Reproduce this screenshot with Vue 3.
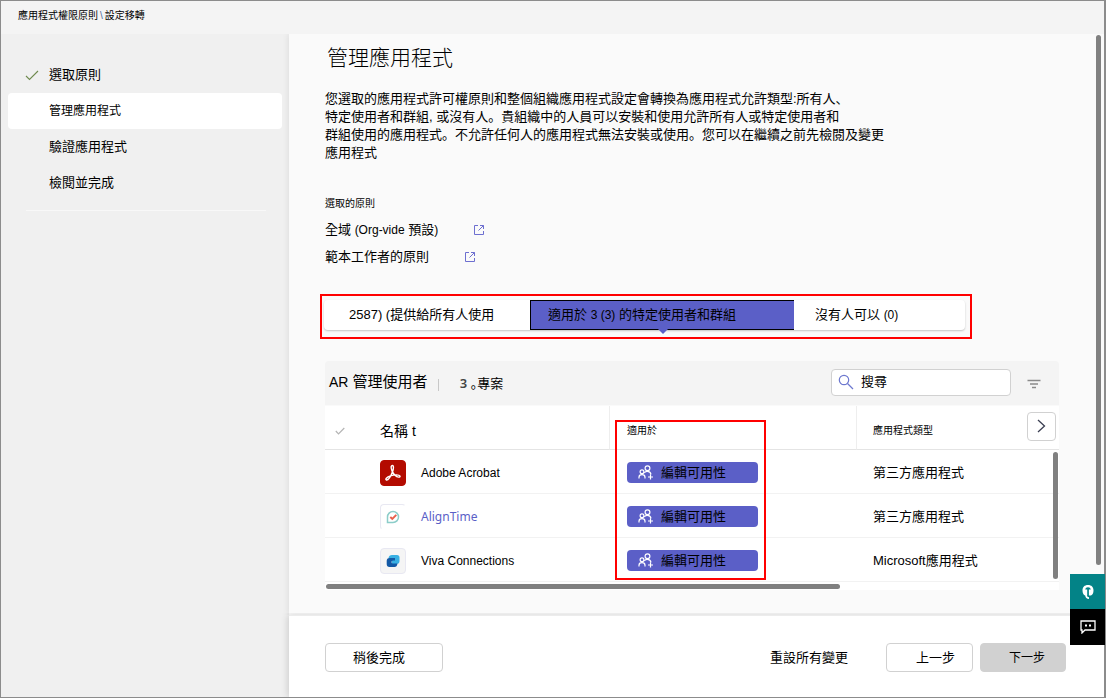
<script setup>
import { ref } from 'vue'

const steps = [
  { label: '選取原則', done: true },
  { label: '管理應用程式', active: true },
  { label: '驗證應用程式' },
  { label: '檢閱並完成' }
]
const apps = [
  { name: 'Adobe Acrobat', icon: 'acrobat', type: '第三方應用程式' },
  { name: 'AlignTime', icon: 'align', type: '第三方應用程式', link: true },
  { name: 'Viva Connections', icon: 'viva', type: 'Microsoft應用程式' }
]
const query = ref('')
</script>

<template>
  <div class="page">
    <header class="top">應用程式權限原則<span class="slash">\</span>設定移轉</header>
    <div class="body">
      <aside class="side">
        <nav>
          <a v-for="s in steps" :key="s.label" href="#" class="step" :class="{ active: s.active }">
            <span class="mark">
              <svg v-if="s.done" width="14" height="11" viewBox="0 0 14 11"><path d="M1 6l3.5 3.5L13 1" fill="none" stroke="#6f8a4e" stroke-width="1.1" /></svg>
            </span>
            {{ s.label }}
          </a>
        </nav>
        <hr />
      </aside>

      <main class="main">
        <div class="scroll">
          <div class="content">
            <h1>管理應用程式</h1>
            <p class="desc">
              您選取的應用程式許可權原則和整個組織應用程式設定會轉換為應用程式允許類型:所有人、<br />
              特定使用者和群組, 或沒有人。貴組織中的人員可以安裝和使用允許所有人或特定使用者和<br />
              群組使用的應用程式。不允許任何人的應用程式無法安裝或使用。您可以在繼續之前先檢閱及變更<br />
              應用程式
            </p>
            <h2>選取的原則</h2>
            <ul class="policies">
              <li>
                <span>全域 <span class="latin">(Org-vide</span> 預設<span class="latin">)</span></span>
                <a href="#" aria-label="全域">
                  <svg width="10" height="10" viewBox="0 0 10 10" fill="none" stroke="#6d6fd0"><path d="M4 .5H.5v9h9V6M6 .5h3.5V4M9.500 .5L4.500 5.500" /></svg>
                </a>
              </li>
              <li>
                <span>範本工作者的原則</span>
                <a href="#" aria-label="範本工作者的原則">
                  <svg width="10" height="10" viewBox="0 0 10 10" fill="none" stroke="#6d6fd0"><path d="M4 .5H.5v9h9V6M6 .5h3.5V4M9.500 .5L4.500 5.500" /></svg>
                </a>
              </li>
            </ul>

            <div class="frame">
              <div class="tabs" role="tablist">
                <button class="tab first" role="tab">2587) (提供給所有人使用</button>
                <button class="tab on" role="tab" aria-selected="true">適用於 <span class="latin">3 (3)</span> 的特定使用者和群組</button>
                <button class="tab last" role="tab">沒有人可以 <span class="latin">(0)</span></button>
              </div>
            </div>

            <section class="card">
              <div class="toolbar">
                <span class="title"><span class="ar">AR</span> 管理使用者</span>
                <span class="bar"></span>
                <span class="count"><b>3</b> <span class="jp">。</span>專案</span>
                <label class="search">
                  <svg width="16" height="16" viewBox="0 0 16 16" fill="none" stroke="#6d78cf" stroke-width="1.2"><circle cx="6" cy="6" r="4.700" /><path d="M9.500 9.500L15 15" /></svg>
                  <input v-model="query" type="text" placeholder="搜尋" aria-label="搜尋" />
                </label>
                <button class="filter" aria-label="filter">
                  <svg width="14" height="10" viewBox="0 0 14 10" fill="none" stroke="#8a8a8a"><path d="M.5 1.500h13M3 5h8M5 8.500h4" stroke-width="1.300" /></svg>
                </button>
              </div>
              <div class="grid">
                <table>
                  <colgroup><col class="c1" /><col class="c2" /><col class="c3" /><col /></colgroup>
                  <thead>
                    <tr>
                      <th class="check"><svg width="10" height="8" viewBox="0 0 10 8"><path d="M.8 4l2.700 2.800L9.300 1" fill="none" stroke="#b4b4b4" stroke-width="1.200" /></svg></th>
                      <th class="name">名稱 t</th>
                      <th class="applies">適用於</th>
                      <th class="type">
                        <div class="typehead"><span>應用程式類型</span>
                          <button class="next" aria-label="next"><svg width="9" height="14" viewBox="0 0 9 14"><path d="M1 1l6.500 6L1 13" fill="none" stroke="#3b3f52" stroke-width="1.300" /></svg></button>
                        </div>
                      </th>
                    </tr>
                  </thead>
                  <tbody>
                    <tr v-for="a in apps" :key="a.name">
                      <td></td>
                      <td>
                        <div class="app">
                          <span class="logo" :class="a.icon">
                            <svg v-if="a.icon === 'acrobat'" width="18" height="18" viewBox="0 0 18 18" fill="none" stroke="#fff" stroke-width="1.400"><path d="M8.400 1.500c1.500 0 1.200 3.400.2 6C7.300 11 4.500 16.300 2.400 16c-1.500-.4.100-3 4.100-4.200 3.500-1.100 8.700-1.500 9.500.2.600 1.700-2.700 1.500-5-.7C8.600 9 6.700 4.700 7.200 2.500c.2-.7.600-1 1.200-1z" /></svg>
                            <svg v-else-if="a.icon === 'align'" width="14" height="14" viewBox="0 0 14 14" fill="none"><path d="M1.500 12.500V7A5.500 5.500 0 1 1 7 12.500z" stroke="#8ccdc9" stroke-width="1.500" /><path d="M4.300 7l2 2 4-4.200" stroke="#e8604c" stroke-width="1.900" /></svg>
                            <svg v-else width="14" height="14" viewBox="0 0 14 14"><path d="M6 1h5q2.500 0 2.500 2.500V7q0 3-3 3H6V4H2.500Q3 1 6 1z" fill="#38b0e3" /><path d="M3.500 4H9v2.500H7Q5.500 6.500 5.500 8T7 9.500h4.500q-.5 3.500-3 3.500h-5Q.7 13 .7 10V7Q.7 4 3.500 4z" fill="#1359a5" /></svg>
                          </span>
                          <a v-if="a.link" href="#">{{ a.name }}</a>
                          <span v-else>{{ a.name }}</span>
                        </div>
                      </td>
                      <td class="applies">
                        <button class="edit">
                          <svg width="16" height="15" viewBox="0 0 16 15" fill="none" stroke="#fff" stroke-width="1.200"><circle cx="9.500" cy="3.200" r="2.400" /><circle cx="4" cy="6.800" r="1.900" /><path d="M1 13.500v-1.200q0-2.700 3-2.700t3 2.700v1.200M6.300 8Q7 6.300 9.500 6.300q3 0 3.500 3M12.500 9.500v5M10 12h5" /></svg>
                          編輯可用性
                        </button>
                      </td>
                      <td class="type">{{ a.type }}</td>
                    </tr>
                  </tbody>
                </table>
                <span class="thumb vert"></span>
                <span class="thumb horiz"></span>
              </div>
            </section>
          </div>
          <span class="pagebar"></span>
        </div>
        <footer class="foot">
          <button class="btn later">稍後完成</button>
          <button class="plain">重設所有變更</button>
          <button class="btn back">上一步</button>
          <button class="btn fwd">下一步</button>
        </footer>
      </main>
    </div>

    <div class="widgets">
      <button class="help" aria-label="help"><svg width="12" height="14" viewBox="0 0 12 14"><path d="M6 0C2.500 0 .5 2.200.5 5.500c0 2.700 1 4.500 2.700 5C3.500 12.800 4.700 14 7 14V12.200c-1.200 0-1.800-.6-2-1.700H5.200V4.500H3.200C3.600 2.900 4.500 2.200 6 2.200s2.400.7 2.800 2.300H6.900v6H9c1.600-.7 2.500-2.400 2.500-5C11.500 2.200 9.500 0 6 0z" fill="#fff" /></svg></button>
      <button class="chat" aria-label="chat"><svg width="16" height="14" viewBox="0 0 16 14" fill="none" stroke="#fff"><path d="M1 1h14v9H5l-3 3v-3H1z" stroke-width="1.300" /><path d="M5 5.500h2M9 5.500h2" stroke-width="2" /></svg></button>
    </div>
  </div>
</template>

<style>
body { margin: 0; background: #fafafa; }
</style>

<style scoped>
*, *::after { box-sizing: border-box; }
.page {
  position: relative;
  display: flex;
  flex-direction: column;
  min-height: 100vh;
  border: 1px solid #8c8c8c;
  border-right-width: 2px;
  background: #fafafa;
  color: #000;
  font: 13px/18px "Liberation Sans", "Noto Sans CJK TC", sans-serif;
}
button, input { font: inherit; color: inherit; margin: 0; padding: 0; border: 0; background: none; }
button { cursor: pointer; }
svg { display: block; flex: none; }
a { color: inherit; text-decoration: none; }
.latin { font-size: 12px; }
.top { height: 33px; padding: 6px 17px; background: #f4f4f4; font-size: 10px; }
.slash { margin: 0 2px; color: #4f6b9a; }
.body { flex: 1; display: grid; grid-template-columns: 288px minmax(0, 1fr); }
.side { background: #f0f0f0; padding: 23px 7px 0; }
.step { display: flex; align-items: center; height: 36px; border-radius: 4px; }
.step.active { background: #fff; font-size: 12px; }
.mark { width: 41px; padding-left: 17px; }
hr { margin: 9px 16px 0 18px; border: 0; border-top: 1px solid #f8f8f8; }

.main { display: flex; flex-direction: column; min-width: 0; }
.scroll { flex: 1; display: flex; box-shadow: -1px 0 6px rgba(0, 0, 0, .08); clip-path: inset(0 0 0 -8px); }
.content { flex: 1; min-width: 0; padding: 10px 37px 24px 36px; }
.pagebar { flex: none; width: 5px; height: 530px; margin: 1px 3px 0 0; border-radius: 3px; background: #808080; }
h1 { margin: 0; padding-left: 2px; font-size: 21px; line-height: 28px; font-weight: 300; }
.desc { margin: 18px 0 0; font-family: "Liberation Sans", "Noto Sans CJK JP", sans-serif; white-space: nowrap; }
h2 { margin: 34px 0 4px; font-size: 10px; line-height: 16px; font-weight: 400; }
.policies { margin: 0 0 24px; padding: 0; list-style: none; }
.policies li { display: flex; align-items: center; gap: 36px; height: 27px; }

.frame { max-width: 652px; margin: 0 0 22px -5px; padding: 4px 5px 7px 2px; border: 2px solid #f00; }
.tabs { display: grid; grid-template-columns: 206fr 264fr 171fr; height: 30px; border-radius: 4px; background: #fff; box-shadow: 0 1px 2px rgba(0, 0, 0, .22); }
.tab { text-align: left; white-space: nowrap; }
.first { padding-left: 25px; }
.on { position: relative; padding-left: 17px; background: #5b5fc7; border: 1px solid #000; border-right: 0; }
.on::after { content: ""; position: absolute; left: 50%; top: 28px; margin-left: -5px; border: 5px solid transparent; border-top-color: #5b5fc7; border-bottom: 0; }
.last { padding-left: 21px; }

.toolbar { display: flex; align-items: center; height: 44px; padding: 0 18px 2px 4px; background: #f4f4f4; border-radius: 4px 4px 0 0; }
.title { font-size: 15px; }
.ar { font-size: 14px; }
.bar { width: 1px; height: 12px; margin: 6px 21px 0 10px; background: #c8c8c8; }
.count { padding-top: 3px; }
.count b { font-family: "Noto Sans", sans-serif; font-weight: 600; color: #444; }
.jp { font-family: "Noto Sans CJK JP", sans-serif; font-feature-settings: "halt"; }
.search { display: flex; align-items: center; gap: 7px; width: 180px; height: 27px; margin-left: auto; padding: 0 6px; border: 1px solid #d1d1d1; border-radius: 4px; background: #fff; }
.search input { min-width: 0; flex: 1; outline: 0; }
.search input::placeholder { color: #000; opacity: 1; }
.filter { margin: 3px 0 0 16px; }

.grid { position: relative; padding-bottom: 8px; background: #fff; }
table { width: 100%; table-layout: fixed; border-collapse: separate; border-spacing: 0; border-top: 1px solid #fafafa; }
.c1 { width: 55px; }
.c2 { width: 230px; }
.c3 { width: 247px; }
th, td { height: 44px; padding: 0; text-align: left; font-weight: 400; border-bottom: 1px solid #f2f2f2; }
td { padding-top: 2px; }
th { border-bottom-color: #e4e4e4; }
th.name { font-size: 14px; padding-top: 6px; border-right: 1px solid #eee; }
th.check { padding: 6px 0 0 10px; }
.applies { padding-left: 17px; }
th.applies { position: relative; padding-top: 6px; font-size: 10px; border-right: 1px solid #eee; }
th.applies::after { content: ""; position: absolute; z-index: 1; left: 5px; top: 14px; width: 151px; height: 160px; border: 2px solid #f00; pointer-events: none; }
.type { padding-left: 16px; }
.typehead { display: flex; align-items: center; justify-content: space-between; padding: 0 3px 0 0; font-size: 10px; }
.typehead span { padding-top: 6px; }
.next { display: grid; place-items: center; width: 29px; height: 29px; margin-bottom: 3px; border: 1px solid #d1d1d1; border-radius: 4px; background: #fff; }
.app { display: flex; align-items: center; gap: 15px; font-size: 12px; }
.app a { color: #5b5fc7; font-family: "Noto Sans", sans-serif; }
.logo { display: grid; place-items: center; width: 26px; height: 26px; border: 1px solid #e8e8f2; border-radius: 4px; }
.acrobat { background: #b30b00; border-color: #b30b00; }
.align { border-right-color: #fff; border-bottom-color: #fff; }
.viva { background: #f5f5f5; }
.edit { display: flex; align-items: center; gap: 7px; width: 131px; height: 21px; padding-left: 11px; border-radius: 4px; background: #5b5fc7; }
.thumb { position: absolute; border-radius: 3px; background: #808080; }
.vert { top: 47px; right: 1px; width: 5px; height: 127px; }
.horiz { left: 1px; bottom: 1px; width: 70%; height: 5px; }

.foot { display: flex; align-items: center; height: 82px; padding: 2px 38px 0 36px; background: #fff; border-top: 1px solid #ececec; box-shadow: -1px 0 7px rgba(0, 0, 0, .16); clip-path: inset(-2px 0 0 -9px); }
.btn { height: 29px; border: 1px solid #d1d1d1; border-radius: 4px; background: #fff; text-align: left; }
.later { width: 118px; padding-left: 27px; }
.plain { margin: 0 38px 0 auto; }
.back { width: 87px; padding-left: 29px; margin-right: 7px; }
.fwd { width: 86px; padding-left: 28px; background: #d1d1d1; font-size: 12px; }
.widgets { position: absolute; right: -1px; bottom: 52px; width: 35px; }
.widgets button { display: grid; place-items: center; width: 100%; }
.help { height: 35px; background: #038387; }
.chat { height: 36px; background: #000; }
</style>
